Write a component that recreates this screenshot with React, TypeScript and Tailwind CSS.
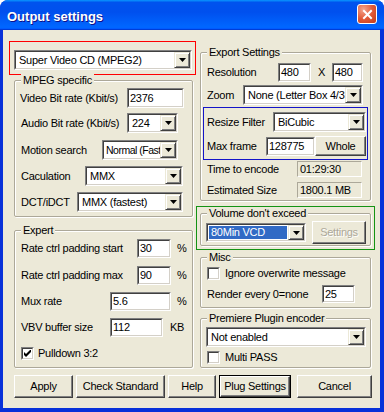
import React from 'react';

type Kids = { className?: string; children?: React.ReactNode };

// classic 2px sunken frame (edit / combo)
function Frame({ className = '', children }: Kids) {
  return (
    <div className={`shrink-0 border border-t-[#808080] border-l-[#808080] border-b-white border-r-white ${className}`}>
      <div className="flex h-full items-center overflow-hidden border border-t-[#404040] border-l-[#404040] border-b-[#d4d0c8] border-r-[#d4d0c8] bg-white">
        {children}
      </div>
    </div>
  );
}

function Input({ className, value }: { className?: string; value: string }) {
  return (
    <Frame className={className}>
      <span className="whitespace-nowrap px-[1px]">{value}</span>
    </Frame>
  );
}

function Arrow() {
  return (
    <div className="flex w-[16px] shrink-0 self-stretch items-center justify-center border border-t-[#ece9d8] border-l-[#ece9d8] border-b-[#404040] border-r-[#404040] bg-[#ece9d8] shadow-[inset_1px_1px_0_#fff,inset_-1px_-1px_0_#808080]">
      <svg width="7" height="4" viewBox="0 0 7 4">
        <path d="M0 0h7L3.5 4z" fill="#000" />
      </svg>
    </div>
  );
}

function Combo({
  className,
  value,
  selected,
  tight,
}: {
  className?: string;
  value: string;
  selected?: boolean;
  tight?: boolean;
}) {
  return (
    <Frame className={className}>
      <div className="flex min-w-0 flex-1 self-stretch items-center overflow-hidden">
        {selected ? (
          <span className="m-[1px] flex flex-1 self-stretch items-center whitespace-nowrap bg-[#316ac5] pl-[2px] text-white">
            {value}
          </span>
        ) : tight ? (
          <span className="whitespace-nowrap pl-[2px] text-[10.5px] tracking-[-0.5px]">{value}</span>
        ) : (
          <span className="whitespace-nowrap pl-[3px]">{value}</span>
        )}
      </div>
      <Arrow />
    </Frame>
  );
}

function Btn({ className = '', children, disabled, primary }: Kids & { disabled?: boolean; primary?: boolean }) {
  const face = `flex h-full w-full items-center justify-center border border-t-white border-l-white border-b-[#404040] border-r-[#404040] bg-[#ece9d8] shadow-[inset_-1px_-1px_0_#808080] ${
    disabled ? 'text-[#aca899] [text-shadow:1px_1px_0_#fff]' : ''
  }`;
  return (
    <div className={`shrink-0 ${primary ? 'border border-black' : ''} ${className}`}>
      <div className={face}>{children}</div>
    </div>
  );
}

function Check({ checked }: { checked?: boolean }) {
  return (
    <div className="h-[13px] w-[13px] shrink-0 border border-t-[#808080] border-l-[#808080] border-b-white border-r-white">
      <div className="flex h-full w-full items-center justify-center border border-t-[#404040] border-l-[#404040] border-b-[#d4d0c8] border-r-[#d4d0c8] bg-white">
        {checked && (
          <svg width="7" height="7" viewBox="0 0 7 7">
            <path d="M0 2L2 4L7 -1L7 2L2 7L0 5Z" fill="#000" />
          </svg>
        )}
      </div>
    </div>
  );
}

function Static({ className = '', value }: { className?: string; value: string }) {
  return (
    <div className={`flex shrink-0 items-center border border-t-[#aca899] border-l-[#aca899] border-b-white border-r-white pl-[2px] ${className}`}>
      {value}
    </div>
  );
}

function Group({ title, className = '', children }: Kids & { title: string }) {
  return (
    <div className={`shrink-0 rounded-[2px] border border-[#aca899] shadow-[inset_1px_1px_0_#fff,1px_1px_0_#fff] ${className}`}>
      <div className="-mt-[7px] ml-[6px] w-fit bg-[#ece9d8] px-[2px]">{title}</div>
      {children}
    </div>
  );
}

export default function App() {
  return (
    <div className="flex h-[412px] w-[384px] flex-col overflow-hidden rounded-t-[8px] bg-[#0831d9] font-['Liberation_Sans',Arial,sans-serif] text-[11px] leading-[13px] tracking-[-0.25px] text-black">
      {/* Title bar */}
      <div className="flex h-[30px] shrink-0 items-start bg-[linear-gradient(180deg,#0997ff,#0053ee_8%,#0050ee_40%,#0066ff_88%,#0066ff_93%,#005bff_95%,#003dd7_96%,#003dd7)]">
        <div className="pl-[7px] pt-[9px] text-[13px] font-bold leading-[15px] tracking-normal text-white [text-shadow:1px_1px_0_#0f1089]">
          Output settings
        </div>
        <div className="ml-auto mr-[7px] mt-[4px] flex h-[20px] w-[20px] items-center justify-center rounded-[3px] border border-white bg-[radial-gradient(circle_at_30%_25%,#f3a58d,#e25a38_50%,#c23b18)]">
          <svg width="11" height="11" viewBox="0 0 11 11">
            <path d="M2 2L9 9M9 2L2 9" stroke="#fff" strokeWidth="2" strokeLinecap="square" />
          </svg>
        </div>
      </div>

      {/* Client */}
      <div className="mb-[4px] ml-[3px] mr-[4px] flex-1 bg-[#ece9d8] pl-[6px]">
        <div className="flex">
          {/* Left column */}
          <div className="w-[187px] shrink-0">
            <div className="mt-[11px] h-[34px] border border-[#ff0000] pl-[4px] pt-[8px]">
              <Combo className="h-[20px] w-[178px]" value="Super Video CD (MPEG2)" />
            </div>

            <Group title="MPEG specific" className="ml-[5px] mt-[5px] h-[137px] w-[179px]">
              <div className="mt-[1px] flex items-center">
                <div className="w-[112px] shrink-0 pl-[5px]">Video Bit rate (Kbit/s)</div>
                <Input className="h-[20px] w-[57px]" value="2376" />
              </div>
              <div className="mt-[5px] flex items-center">
                <div className="w-[112px] shrink-0 pl-[6px]">Audio Bit rate (Kbit/s)</div>
                <Combo className="h-[20px] w-[51px]" value="224" />
              </div>
              <div className="mt-[7px] flex items-center">
                <div className="w-[87px] shrink-0 pl-[6px]">Motion search</div>
                <Combo className="h-[20px] w-[76px]" value="Normal (Fast" tight />
              </div>
              <div className="mt-[6px] flex items-center">
                <div className="w-[70px] shrink-0 pl-[6px]">Caculation</div>
                <Combo className="h-[20px] w-[98px]" value="MMX" />
              </div>
              <div className="mt-[6px] flex items-center">
                <div className="w-[62px] shrink-0 pl-[6px]">DCT/iDCT</div>
                <Combo className="h-[20px] w-[106px]" value="MMX (fastest)" />
              </div>
            </Group>

            <Group title="Expert" className="ml-[5px] mt-[13px] h-[138px] w-[179px]">
              <div className="mt-[2px] flex items-center">
                <div className="w-[122px] shrink-0 pl-[6px]">Rate ctrl padding start</div>
                <Input className="h-[19px] w-[34px]" value="30" />
                <span className="ml-[6px]">%</span>
              </div>
              <div className="mt-[8px] flex items-center">
                <div className="w-[122px] shrink-0 pl-[6px]">Rate ctrl padding max</div>
                <Input className="h-[19px] w-[34px]" value="90" />
                <span className="ml-[6px]">%</span>
              </div>
              <div className="mt-[7px] flex items-center">
                <div className="w-[95px] shrink-0 pl-[6px]">Mux rate</div>
                <Input className="h-[19px] w-[61px]" value="5.6" />
                <span className="ml-[6px]">%</span>
              </div>
              <div className="mt-[7px] flex items-center">
                <div className="w-[95px] shrink-0 pl-[6px]">VBV buffer size</div>
                <Input className="h-[19px] w-[53px]" value="112" />
                <span className="ml-[7px]">KB</span>
              </div>
              <div className="mt-[10px] flex items-center pl-[6px]">
                <Check checked />
                <span className="ml-[4px]">Pulldown 3:2</span>
              </div>
            </Group>
          </div>

          {/* Right column */}
          <div className="w-[179px] shrink-0">
            <Group title="Export Settings" className="ml-[4px] mt-[22px] h-[149px] w-[171px]">
              <div className="mt-[4px] flex items-center">
                <div className="w-[77px] shrink-0 pl-[6px]">Resolution</div>
                <Input className="h-[19px] w-[33px]" value="480" />
                <div className="w-[21px] shrink-0 text-center">X</div>
                <Input className="h-[19px] w-[31px]" value="480" />
              </div>
              <div className="mt-[3px] flex items-center">
                <div className="w-[42px] shrink-0 pl-[6px]">Zoom</div>
                <Combo className="h-[20px] w-[120px]" value="None (Letter Box 4/3" />
              </div>
              <div className="ml-[2px] mt-[2px] h-[53px] w-[165px] border border-[#1414c8]">
                <div className="mt-[4px] flex items-center">
                  <div className="w-[69px] shrink-0 pl-[3px]">Resize Filter</div>
                  <Combo className="h-[20px] w-[93px]" value="BiCubic" />
                </div>
                <div className="mt-[4px] flex items-center">
                  <div className="w-[62px] shrink-0 pl-[3px]">Max frame</div>
                  <Input className="h-[19px] w-[49px]" value="128775" />
                  <Btn className="h-[20px] w-[51px]">Whole</Btn>
                </div>
              </div>
              <div className="mt-[1px] flex items-center">
                <div className="w-[96px] shrink-0 pl-[6px]">Time to encode</div>
                <Static className="h-[16px] w-[65px]" value="01:29:30" />
              </div>
              <div className="mt-[5px] flex items-center">
                <div className="w-[96px] shrink-0 pl-[6px]">Estimated Size</div>
                <Static className="h-[16px] w-[65px]" value="1800.1 MB" />
              </div>
            </Group>

            <div className="mt-[5px] h-[44px] w-[179px] border border-[#149314]">
              <Group title="Volume don't exceed" className="ml-[3px] mt-[6px] h-[33px] w-[171px]">
                <div className="mt-[1px] flex h-[23px] items-center pl-[5px]">
                  <Combo className="h-[19px] w-[100px]" value="80Min VCD" selected />
                  <Btn className="ml-[6px] h-[23px] w-[54px]" disabled>
                    Settings
                  </Btn>
                </div>
              </Group>
            </div>

            <Group title="Misc" className="ml-[4px] mt-[7px] h-[51px] w-[171px]">
              <div className="mt-[3px] flex items-center pl-[6px]">
                <Check />
                <span className="ml-[5px]">Ignore overwrite message</span>
              </div>
              <div className="mt-[5px] flex items-center">
                <div className="w-[121px] shrink-0 pl-[6px]">Render every 0=none</div>
                <Input className="h-[18px] w-[33px]" value="25" />
              </div>
            </Group>

            <Group title="Premiere Plugin encoder" className="ml-[4px] mt-[10px] h-[50px] w-[171px]">
              <div className="mt-[2px] pl-[5px]">
                <Combo className="h-[20px] w-[160px]" value="Not enabled" />
              </div>
              <div className="mt-[4px] flex items-center pl-[6px]">
                <Check />
                <span className="ml-[5px]">Multi PASS</span>
              </div>
            </Group>
          </div>
        </div>

        {/* Buttons */}
        <div className="ml-[5px] mt-[7px] flex h-[23px]">
          <Btn className="h-[23px] w-[59px]">Apply</Btn>
          <Btn className="ml-[3px] h-[23px] w-[89px]">Check Standard</Btn>
          <Btn className="ml-[3px] h-[23px] w-[48px]">Help</Btn>
          <Btn className="ml-[3px] h-[23px] w-[72px]" primary>
            Plug Settings
          </Btn>
          <Btn className="ml-[6px] h-[23px] w-[75px]">Cancel</Btn>
        </div>
      </div>
    </div>
  );
}
